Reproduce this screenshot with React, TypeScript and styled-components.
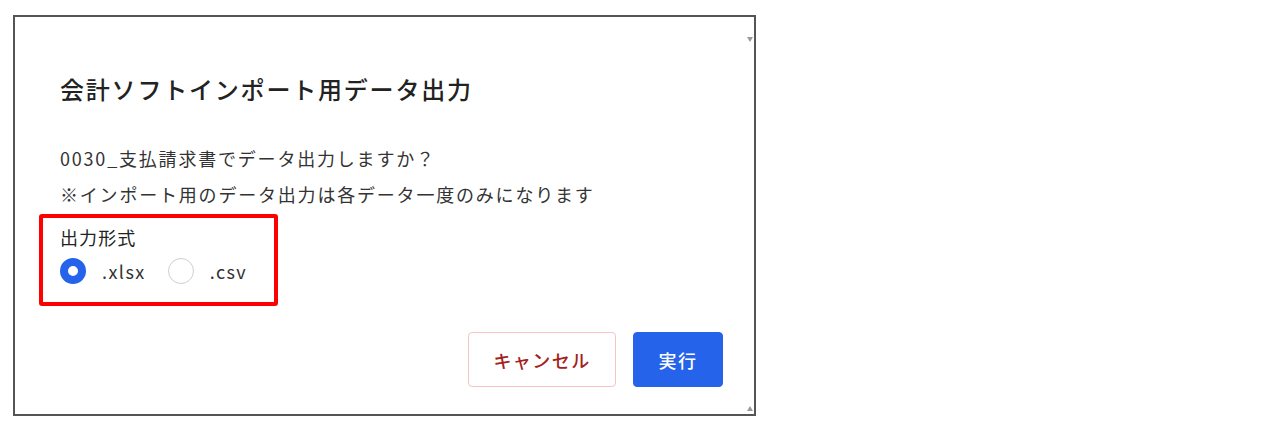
import React, {useState} from 'react';
import styled, {createGlobalStyle} from 'styled-components';

const GlobalStyle = createGlobalStyle`
  html, body {
    margin: 0;
    padding: 0;
    background: #fff;
  }

  body {
    font-family: "Noto Sans CJK JP", "Noto Sans", sans-serif;
    color: #333;
  }
`;

const Page = styled.div`
  width: 1280px;
  height: 427px;
  padding: 15px 0 0 13px;
  box-sizing: border-box;
`;

const Dialog = styled.section`
  position: relative;
  width: 743px;
  height: 401px;
  box-sizing: border-box;
  border: 2px solid #555;
  background: #fff;
  padding: 56px 31px 27px 45px;
  display: flex;
  flex-direction: column;
`;

const Title = styled.h2`
  margin: 0;
  font-size: 24px;
  line-height: 32px;
  font-weight: 500;
  letter-spacing: 0.075em;
  color: #222;
`;

const Message = styled.p`
  margin: 0;
  font-size: 18px;
  line-height: 36px;
  letter-spacing: 0.1em;
  color: #333;

  &:first-of-type {
    margin-top: 35px;
  }
`;

const FormatGroup = styled.fieldset`
  margin: 2px 0 0 -21px;
  width: 239px;
  height: 92px;
  box-sizing: border-box;
  border: 4px solid #ff0000;
  border-radius: 3px;
  padding: 7px 0 0 17px;
  display: flex;
  flex-direction: column;
  gap: 8px;
`;

const GroupLabel = styled.legend`
  float: left;
  padding: 0;
  font-size: 18px;
  line-height: 24px;
  letter-spacing: 0.06em;
  color: #222;
`;

const RadioRow = styled.div`
  display: flex;
  align-items: center;
  height: 28px;
  clear: both;
`;

const RadioOption = styled.label<{ $gapAfter?: number }>`
  display: flex;
  align-items: center;
  gap: 16px;
  margin-right: ${p => p.$gapAfter ?? 0}px;
  font-size: 18px;
  letter-spacing: 0.08em;
  color: #333;
  cursor: pointer;
`;

const RadioDot = styled.span<{ $checked: boolean }>`
  width: 26px;
  height: 26px;
  border-radius: 50%;
  box-sizing: border-box;
  flex: none;
  background: #fff;
  border: ${p => p.$checked ? '8.5px solid #2563eb' : '1px solid #cfcfcf'};
`;

const Footer = styled.div`
  margin-top: 26px;
  display: flex;
  justify-content: flex-end;
  gap: 17px;
`;

const Button = styled.button<{ $primary?: boolean }>`
  height: 55px;
  width: ${p => p.$primary ? 90 : 148}px;
  box-sizing: border-box;
  border-radius: 4px;
  font-family: inherit;
  font-size: 18px;
  font-weight: 500;
  letter-spacing: 0.08em;
  cursor: pointer;
  border: 1px solid ${p => p.$primary ? '#2563eb' : '#f6c4c4'};
  background: ${p => p.$primary ? '#2563eb' : '#fff'};
  color: ${p => p.$primary ? '#fff' : '#a3221c'};
`;

const ScrollArrow = styled.span<{ $up?: boolean }>`
  position: absolute;
  right: 1px;
  width: 0;
  height: 0;
  border-left: 3px solid transparent;
  border-right: 3px solid transparent;
  ${p => p.$up
    ? 'bottom: 3px; border-bottom: 5px solid #9a9a9a;'
    : 'top: 20px; border-top: 5px solid #9a9a9a;'}
`;

type Format = 'xlsx' | 'csv';

export default function App() {
  const [format, setFormat] = useState<Format>('xlsx');
  return (
    <>
      <GlobalStyle/>
      <Page>
        <Dialog>
          <Title>会計ソフトインポート用データ出力</Title>
          <Message>0030_支払請求書でデータ出力しますか？</Message>
          <Message>※インポート用のデータ出力は各データ一度のみになります</Message>
          <FormatGroup>
            <GroupLabel>出力形式</GroupLabel>
            <RadioRow>
              <RadioOption $gapAfter={22} onClick={() => setFormat('xlsx')}>
                <RadioDot $checked={format === 'xlsx'}/>
                .xlsx
              </RadioOption>
              <RadioOption onClick={() => setFormat('csv')}>
                <RadioDot $checked={format === 'csv'}/>
                .csv
              </RadioOption>
            </RadioRow>
          </FormatGroup>
          <Footer>
            <Button>キャンセル</Button>
            <Button $primary>実行</Button>
          </Footer>
          <ScrollArrow/>
          <ScrollArrow $up/>
        </Dialog>
      </Page>
    </>
  );
}
